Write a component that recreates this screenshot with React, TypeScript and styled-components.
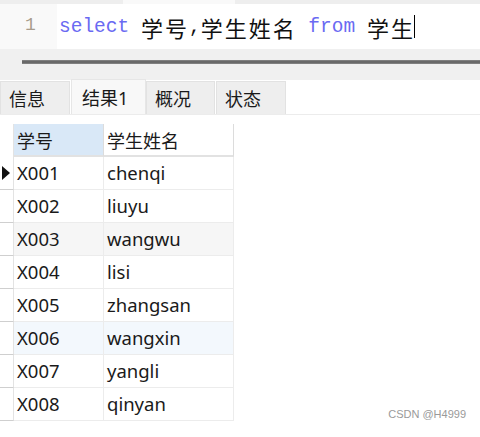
import React from 'react'
import styled, { createGlobalStyle } from 'styled-components'

const GlobalStyle = createGlobalStyle`
  html, body {
    margin: 0;
    padding: 0;
    background: #ffffff;
  }
  body {
    font-family: 'Noto Sans', 'Noto Sans CJK SC', sans-serif;
    color: #1a1a1a;
  }
`

const rows = [
  { id: 'X001', name: 'chenqi', current: true },
  { id: 'X002', name: 'liuyu' },
  { id: 'X003', name: 'wangwu', tone: 'gray' },
  { id: 'X004', name: 'lisi' },
  { id: 'X005', name: 'zhangsan' },
  { id: 'X006', name: 'wangxin', tone: 'blue' },
  { id: 'X007', name: 'yangli' },
  { id: 'X008', name: 'qinyan' }
]

const tabs = [
  { label: '信息', width: 70 },
  { label: '结果1', width: 75, active: true },
  { label: '概况', width: 69 },
  { label: '状态', width: 70 }
]

const App = () => {
  return (
    <Page>
      <GlobalStyle />
      <TopStrip>
        <TopTab />
      </TopStrip>

      <Editor>
        <Gutter>1</Gutter>
        <Code>
          <Keyword>select</Keyword>
          <Plain> </Plain>
          <Cjk>学号</Cjk>
          <Plain>,</Plain>
          <Cjk>学生姓名</Cjk>
          <Plain> </Plain>
          <Keyword>from</Keyword>
          <Plain> </Plain>
          <Cjk>学生</Cjk>
          <Caret />
        </Code>
      </Editor>

      <Splitter>
        <SplitterBar />
      </Splitter>

      <TabBar>
        {tabs.map((tab) => (
          <Tab key={tab.label} $active={!!tab.active} $width={tab.width}>
            {tab.label}
          </Tab>
        ))}
      </TabBar>

      <Results>
        <Grid>
          <HeaderRow>
            <Indicator $header />
            <HeaderCell $selected>学号</HeaderCell>
            <HeaderCell>学生姓名</HeaderCell>
          </HeaderRow>
          {rows.map((row) => (
            <DataRow key={row.id} $tone={row.tone}>
              <Indicator>{row.current && <Pointer />}</Indicator>
              <Cell>{row.id}</Cell>
              <Cell>{row.name}</Cell>
            </DataRow>
          ))}
        </Grid>
        <Watermark>CSDN @H4999</Watermark>
      </Results>
    </Page>
  )
}

const Page = styled.div`
  width: 480px;
  height: 437px;
  overflow: hidden;
  background: #ffffff;
`

const TopStrip = styled.div`
  height: 4px;
  background: #eeeeee;
  display: flex;
`

const TopTab = styled.div`
  margin-left: 123px;
  width: 112px;
  background: #f9f9f9;
`

const Editor = styled.div`
  height: 45px;
  display: flex;
  background: #ffffff;
`

const Gutter = styled.div`
  width: 57px;
  background: #f9f9f9;
  box-sizing: border-box;
  padding: 10px 0 0 25px;
  font-family: 'Liberation Mono', monospace;
  font-size: 18px;
  line-height: 22px;
  color: #a89c8c;
`

const Code = styled.div`
  display: flex;
  align-items: center;
  padding-left: 2px;
  white-space: pre;
  font-family: 'Liberation Mono', 'Noto Sans CJK SC', monospace;
  font-size: 19.5px;
  height: 45px;
`

const Keyword = styled.span`
  color: #6a6af2;
`

const Plain = styled.span`
  color: #111111;
`

const Cjk = styled.span`
  font-family: 'Noto Sans CJK SC', sans-serif;
  font-size: 22px;
  letter-spacing: 2px;
  color: #111111;
`

const Caret = styled.span`
  display: inline-block;
  width: 1px;
  height: 23px;
  margin-left: -1px;
  background: #000000;
`

const Splitter = styled.div`
  height: 31px;
  background: #f0f0f0;
  box-sizing: border-box;
  padding: 11px 0 0 22px;
`

const SplitterBar = styled.div`
  height: 4px;
  background: linear-gradient(#8a8a8a, #5e5e5e 50%, #8a8a8a);
`

const TabBar = styled.div`
  height: 35px;
  display: flex;
  align-items: flex-end;
  background: #ffffff;
  border-bottom: 1px solid #ececec;
  box-sizing: border-box;
`

const Tab = styled.div<{ $active: boolean; $width: number }>`
  width: ${(p) => p.$width}px;
  height: ${(p) => (p.$active ? 35 : 33)}px;
  box-sizing: border-box;
  display: flex;
  align-items: center;
  padding-left: ${(p) => (p.$active ? 10 : 8)}px;
  margin-right: ${(p) => (p.$active ? 0 : 1)}px;
  background: ${(p) => (p.$active ? '#f8f8f8' : '#eeeeee')};
  border: 1px solid ${(p) => (p.$active ? '#e6e6e6' : '#e2e2e2')};
  border-bottom: none;
  font-family: 'Noto Sans', 'Noto Sans CJK SC', sans-serif;
  font-size: 18px;
  color: #1a1a1a;
`

const Results = styled.div`
  padding-top: 9px;
  display: flex;
  flex-direction: column;
`

const Grid = styled.div`
  display: flex;
  flex-direction: column;
  width: 234px;
`

const columns = '14px 90px 130px'

const HeaderRow = styled.div`
  display: grid;
  grid-template-columns: ${columns};
  height: 33px;
`

const DataRow = styled.div<{ $tone?: string }>`
  display: grid;
  grid-template-columns: ${columns};
  height: 33px;
  background: ${(p) => (p.$tone === 'gray' ? '#f6f6f6' : p.$tone === 'blue' ? '#f3f8fd' : '#ffffff')};
`

const Indicator = styled.div<{ $header?: boolean }>`
  box-sizing: border-box;
  background: #ffffff;
  border-right: 1px solid #e3e3e3;
  border-bottom: ${(p) => (p.$header ? 'none' : '1px solid #cfcfcf')};
  display: flex;
  align-items: center;
  padding-left: 2px;
`

const Pointer = styled.div`
  width: 0;
  height: 0;
  border-top: 7px solid transparent;
  border-bottom: 7px solid transparent;
  border-left: 8px solid #111111;
`

const HeaderCell = styled.div<{ $selected?: boolean }>`
  box-sizing: border-box;
  display: flex;
  align-items: center;
  padding-left: 3px;
  background: ${(p) => (p.$selected ? '#d9e8f7' : '#ffffff')};
  border-right: 1px solid #dcdcdc;
  border-bottom: 2px solid #e2e2e2;
  font-family: 'Noto Sans', 'Noto Sans CJK SC', sans-serif;
  font-size: 18px;
  color: #1a1a1a;
`

const Cell = styled.div`
  box-sizing: border-box;
  display: flex;
  align-items: center;
  padding: 0 0 2px 3px;
  border-right: 1px solid #ececec;
  border-bottom: 1px solid #ececec;
  font-family: 'Noto Sans', 'Noto Sans CJK SC', sans-serif;
  font-size: 18.5px;
  color: #1a1a1a;
`

const Watermark = styled.div`
  align-self: flex-end;
  margin: -13px 14px 0 0;
  font-family: 'Liberation Sans', sans-serif;
  font-size: 11px;
  color: #9a9a9a;
`

export default App
